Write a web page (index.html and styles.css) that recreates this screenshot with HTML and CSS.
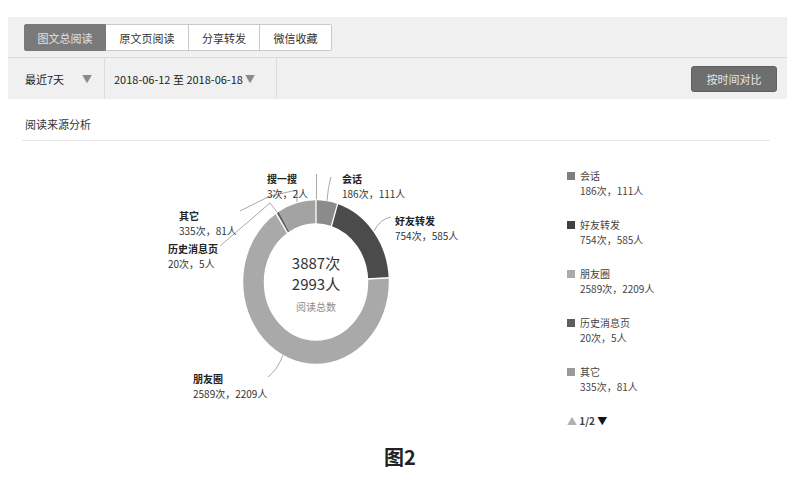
FILE: index.html
```html
<!DOCTYPE html>
<html lang="zh-CN">
<head>
  <meta charset="UTF-8" />
  <meta name="viewport" content="width=device-width, initial-scale=1.0"/>
  <title>阅读来源分析</title>
  <link rel="stylesheet" href="styles.css">
</head>
<body>

  <!-- Top filter panel -->
  <div class="panel">
    <div class="tabs-row">
      <div class="tabs">
        <span class="tab active">图文总阅读</span>
        <span class="tab">原文页阅读</span>
        <span class="tab">分享转发</span>
        <span class="tab">微信收藏</span>
      </div>
    </div>
    <div class="filter-row">
      <div class="filter range">最近7天 <span class="caret">▼</span></div>
      <div class="filter dates">2018-06-12 至 2018-06-18<span class="caret">▼</span></div>
      <div class="spacer"></div>
      <button class="compare-btn">按时间对比</button>
    </div>
  </div>

  <div class="section">
    <div class="section-title">阅读来源分析</div>
  </div>

  <!-- Donut chart + legend -->
  <div class="chart-row">
    <div class="chart">
      <svg class="donut" width="567" height="290" viewBox="0 0 567 290">
        <g class="leaders" fill="none" stroke="#a9a9a9" stroke-width="1">
          <path d="M316.5 60 L316.5 33"/>
          <path d="M327 60 Q328 45 331 36"/>
          <path d="M374 90 Q380 78 391 76"/>
          <path d="M283 214 Q278 228 268 236"/>
          <path d="M277 71 L270 62 L220 105"/>
          <path d="M297 61 L297 49 L270 55 L240 70"/>
        </g>
        <g transform="translate(316 141) scale(1 1.123)">
          <g transform="rotate(-90)" fill="none" stroke-width="20.5">
            <circle r="62.5" stroke="#8b8b8b" stroke-dasharray="18.79 392.7" stroke-dashoffset="0"/>
            <circle r="62.5" stroke="#4b4b4b" stroke-dasharray="76.18 392.7" stroke-dashoffset="-18.79"/>
            <circle r="62.5" stroke="#a9a9a9" stroke-dasharray="261.57 392.7" stroke-dashoffset="-94.97"/>
            <circle r="62.5" stroke="#5e5e5e" stroke-dasharray="2.02 392.7" stroke-dashoffset="-356.54"/>
            <circle r="62.5" stroke="#a3a3a3" stroke-dasharray="33.84 392.7" stroke-dashoffset="-358.56"/>
            <circle r="62.5" stroke="#9a9a9a" stroke-dasharray="0.3 392.7" stroke-dashoffset="-392.4"/>
          </g>
          <g stroke="#fff" stroke-width="1.3" vector-effect="non-scaling-stroke">
            <line x1="0" y1="-51" x2="0" y2="-74"/>
            <line x1="15.1" y1="-48.7" x2="21.9" y2="-70.7"/>
            <line x1="50.9" y1="-2.6" x2="73.9" y2="-3.8"/>
            <line x1="-27.9" y1="-42.7" x2="-40.5" y2="-61.9"/>
          </g>
        </g>
      </svg>

      <div class="center-total">
        <div class="total-num">3887次</div>
        <div class="total-num">2993人</div>
        <div class="total-label">阅读总数</div>
      </div>

      <div class="label lbl-search"><b>搜一搜</b><span>3次，2人</span></div>
      <div class="label lbl-chat"><b>会话</b><span>186次，111人</span></div>
      <div class="label lbl-friend"><b>好友转发</b><span>754次，585人</span></div>
      <div class="label lbl-other"><b>其它</b><span>335次，81人</span></div>
      <div class="label lbl-history"><b>历史消息页</b><span>20次，5人</span></div>
      <div class="label lbl-moments"><b>朋友圈</b><span>2589次，2209人</span></div>
    </div>

    <div class="legend">
      <div class="legend-item">
        <div class="legend-name"><i class="swatch c-chat"></i>会话</div>
        <div class="legend-value">186次，111人</div>
      </div>
      <div class="legend-item">
        <div class="legend-name"><i class="swatch c-friend"></i>好友转发</div>
        <div class="legend-value">754次，585人</div>
      </div>
      <div class="legend-item">
        <div class="legend-name"><i class="swatch c-moments"></i>朋友圈</div>
        <div class="legend-value">2589次，2209人</div>
      </div>
      <div class="legend-item">
        <div class="legend-name"><i class="swatch c-history"></i>历史消息页</div>
        <div class="legend-value">20次，5人</div>
      </div>
      <div class="legend-item">
        <div class="legend-name"><i class="swatch c-other"></i>其它</div>
        <div class="legend-value">335次，81人</div>
      </div>
      <div class="pager"><span class="up">▲</span> <b>1/2</b> <span class="down">▼</span></div>
    </div>
  </div>

  <div class="caption">图2</div>

</body>
</html>
```

FILE: styles.css
```css
* {
  margin: 0;
  padding: 0;
  box-sizing: border-box;
}

body {
  width: 800px;
  height: 487px;
  overflow: hidden;
  background: #fff;
  color: #333;
  font-family: "Noto Sans CJK SC", "Liberation Sans", sans-serif;
  font-size: 11px;
}

/* Top panel */
.panel {
  margin: 17px 13px 0 8px;
  background: #f0f0f0;
}

.tabs-row {
  padding: 7px 16px 6px;
  border-bottom: 1px solid #dcdcdc;
}

.tabs {
  display: flex;
  height: 27px;
}

.tab {
  display: flex;
  align-items: center;
  justify-content: center;
  height: 27px;
  background: #fff;
  border: 1px solid #c9c9c9;
  border-left: none;
  color: #333;
  font-size: 11px;
}

.tab:nth-child(1) { width: 82px; border-left: 1px solid #c9c9c9; border-radius: 2px 0 0 2px; }
.tab:nth-child(2) { width: 83px; }
.tab:nth-child(3) { width: 71px; }
.tab:nth-child(4) { width: 72px; border-radius: 0 2px 2px 0; }

.tab.active {
  background: #7a7a7a;
  border-color: #7a7a7a;
  color: #e4e4e4;
}

.filter-row {
  display: flex;
  align-items: center;
  height: 41px;
}

.filter {
  display: flex;
  align-items: center;
  height: 100%;
  border-right: 1px solid #dcdcdc;
  color: #222;
}

.filter.range {
  width: 97px;
  padding-left: 17px;
}

.filter.range .caret {
  margin-left: 18px;
}

.filter.dates {
  width: 172px;
  padding-left: 9px;
}

.caret {
  color: #8a8a8a;
  font-size: 10px;
  margin-left: 2px;
}

.spacer {
  flex: 1;
}

.compare-btn {
  width: 86px;
  height: 26px;
  margin-right: 10px;
  border: 1px solid #5f5f5f;
  border-radius: 3px;
  background: #6e6e6e;
  color: #e6e6e6;
  font-family: inherit;
  font-size: 11px;
}

/* Section heading */
.section {
  margin: 0 30px 0 22px;
  border-bottom: 1px solid #e6e6e6;
}

.section-title {
  padding: 17px 3px 8px;
  line-height: 16px;
  color: #333;
}

/* Chart area */
.chart-row {
  display: flex;
  height: 290px;
}

.chart {
  position: relative;
  width: 567px;
  height: 290px;
}

.donut {
  position: absolute;
  top: 0;
  left: 0;
}

.center-total {
  position: absolute;
  top: 111px;
  left: 266px;
  width: 100px;
  text-align: center;
}

.total-num {
  font-size: 15px;
  line-height: 21px;
  color: #333;
}

.total-label {
  margin-top: 6px;
  font-size: 10px;
  line-height: 14px;
  color: #8c8c8c;
}

.label {
  position: absolute;
  display: flex;
  flex-direction: column;
  font-size: 10px;
  color: #333;
  white-space: nowrap;
}

.label b {
  line-height: 14px;
  color: #222;
}

.label span {
  line-height: 15px;
}

.lbl-search  { left: 267px; top: 31px; }
.lbl-chat    { left: 342px; top: 31px; }
.lbl-friend  { left: 395px; top: 73px; }
.lbl-other   { left: 179px; top: 68px; }
.lbl-history { left: 168px; top: 101px; }
.lbl-moments { left: 193px; top: 231px; }

/* Legend */
.legend {
  display: flex;
  flex-direction: column;
  gap: 20px;
  padding-top: 28px;
  font-size: 10px;
  color: #444;
}

.legend-name {
  display: flex;
  align-items: center;
  line-height: 14px;
}

.swatch {
  width: 8px;
  height: 8px;
  margin-right: 5px;
}

.legend-value {
  padding-left: 13px;
  line-height: 15px;
}

.c-chat    { background: #7e7e7e; }
.c-friend  { background: #404040; }
.c-moments { background: #ababab; }
.c-history { background: #5e5e5e; }
.c-other   { background: #9a9a9a; }

.pager {
  line-height: 14px;
  font-size: 10px;
}

.pager .up {
  color: #b0b0b0;
}

.pager .down {
  color: #111;
}

.caption {
  margin-top: 14px;
  text-align: center;
  font-size: 20px;
  font-weight: bold;
  line-height: 24px;
  color: #222;
}
```
